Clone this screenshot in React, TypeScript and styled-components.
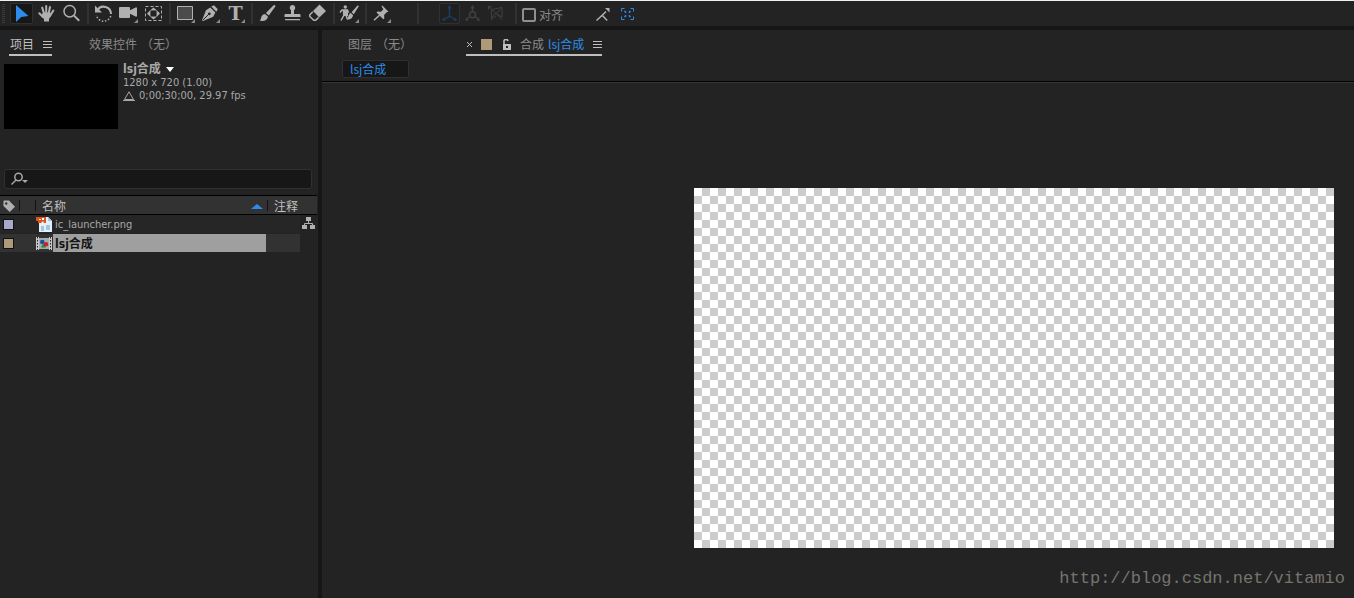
import React from "react";
import styled, { createGlobalStyle, css } from "styled-components";

const latin = '"DejaVu Sans Condensed", "DejaVu Sans", "Noto Sans CJK SC", sans-serif';
const cjk = '"Noto Sans CJK SC", "Noto Sans", sans-serif';

const c = {
  panel: "#232323",
  gutter: "#161616",
  icon: "#b0b0b0",
  text: "#a8a8a8",
  dim: "#8a8a8a",
  bright: "#bfbfbf",
  blue: "#2d8ceb",
};

const GlobalStyle = createGlobalStyle`
  *, *::before, *::after { box-sizing: border-box; }
  body {
    margin: 0;
    background: ${c.panel};
    color: ${c.text};
    font: 12px/14px ${cjk};
  }
  button {
    padding: 0;
    border: 0;
    background: none;
    color: inherit;
    font: inherit;
  }
  svg { display: block; }
`;

const Page = styled.div`
  display: flex;
  flex-direction: column;
  min-height: 100vh;
  border-top: 1px solid #eef3f2;
`;

const Toolbar = styled.header`
  display: flex;
  align-items: center;
  height: 29px;
  border-bottom: 4px solid ${c.gutter};
`;

const Grip = styled.div`
  width: 3px;
  height: 20px;
  margin: 0 4px 0 2px;
  background: repeating-linear-gradient(#3c3c3c 0 1px, transparent 1px 2px);
`;

const Group = styled.div`
  display: flex;
`;

const Separator = styled.div<{ $before?: number; $after?: number }>`
  width: 2px;
  height: 21px;
  margin: 0 ${(p) => p.$after ?? 2}px 0 ${(p) => p.$before ?? 3}px;
  background: #313131;
`;

const ToolButton = styled.button<{ $active?: boolean; $narrow?: boolean; $lit?: boolean }>`
  position: relative;
  display: flex;
  justify-content: center;
  width: ${(p) => (p.$narrow ? 23 : 25)}px;
  height: 25px;
  color: ${(p) => (p.$lit ? c.blue : p.$narrow ? "#404040" : c.icon)};
  ${(p) =>
    p.$active &&
    css`
      color: ${p.$narrow ? "#1d3d62" : c.blue};
      &::before {
        content: "";
        position: absolute;
        inset: 2px 1px;
        border: 1px solid #303030;
        border-radius: 2px;
        background: ${p.$narrow ? "#202020" : "#171717"};
      }
    `}
  svg {
    position: relative;
    flex: none;
  }
`;

const TypeGlyph = styled.span`
  font: bold 19px/25px "DejaVu Serif", serif;
`;

const FlyoutMark = styled.i`
  position: absolute;
  right: 3px;
  bottom: 3px;
  border: 2px solid transparent;
  border-right-color: #8a8a8a;
  border-bottom-color: #8a8a8a;
`;

const SnapLabel = styled.label`
  display: flex;
  align-items: center;
  gap: 3px;
  margin: 0 27px 0 3px;
  padding-top: 2px;
  color: ${c.dim};
`;

const CheckBox = styled.input`
  appearance: none;
  width: 14px;
  height: 14px;
  margin: 0;
  border: 2px solid #8f8f8f;
  border-radius: 2px;
`;

const Workspace = styled.div`
  display: flex;
  flex: 1;
`;

const ProjectPanel = styled.section`
  flex: none;
  width: 322px;
  border-right: 4px solid ${c.gutter};
`;

const ViewerPanel = styled.section`
  display: flex;
  flex: 1;
  flex-direction: column;
  min-width: 0;
`;

const TabBar = styled.nav<{ $inset: number; $gap: number }>`
  display: flex;
  gap: ${(p) => p.$gap}px;
  height: 26px;
  padding-left: ${(p) => p.$inset}px;
`;

const Tab = styled.div<{ $active?: boolean }>`
  display: flex;
  align-items: center;
  height: 26px;
  padding: 4px 0 0 1px;
  border-bottom: 2px solid ${(p) => (p.$active ? c.bright : "transparent")};
  color: ${(p) => (p.$active ? c.bright : c.dim)};
`;

const TabName = styled.button<{ $tone?: string }>`
  display: flex;
  gap: 4px;
  color: ${(p) => p.$tone ?? "inherit"};
`;

const TabTool = styled.button<{ $left?: number }>`
  margin-left: ${(p) => p.$left ?? 0}px;
`;

const CompName = styled.span`
  color: ${c.blue};
`;

const Swatch = styled.span<{ $color: string; $outlined?: boolean }>`
  display: block;
  width: 11px;
  height: 11px;
  margin-left: ${(p) => (p.$outlined ? 3 : 9)}px;
  border: ${(p) => (p.$outlined ? "1px solid #111" : "0")};
  background: ${(p) => p.$color};
`;

const Summary = styled.div`
  display: flex;
  gap: 5px;
  height: 65px;
  margin: 8px 4px 40px;
`;

const Thumbnail = styled.div`
  width: 114px;
  height: 65px;
  background: #000;
`;

const Details = styled.div`
  display: flex;
  flex-direction: column;
  margin-top: -1px;
  font: 11px/13px ${latin};
`;

const SummaryName = styled.button`
  display: flex;
  align-items: center;
  gap: 5px;
  height: 13px;
  font: bold 12px/13px ${latin};
`;

const Duration = styled.span`
  display: flex;
  align-items: center;
  gap: 4px;
`;

const Search = styled.label`
  display: flex;
  align-items: center;
  gap: 4px;
  height: 20px;
  margin: 0 6px 6px 4px;
  padding-left: 6px;
  border: 1px solid #303030;
  border-radius: 3px;
  background: #171717;
`;

const SearchInput = styled.input`
  flex: 1;
  min-width: 0;
  padding: 0;
  border: 0;
  outline: 0;
  background: none;
  color: ${c.text};
  font: 11px/14px ${latin};
`;

const Items = styled.table`
  width: 317px;
  table-layout: fixed;
  border-collapse: separate;
  border-spacing: 0;
`;

const HeadCell = styled.th<{ $line?: boolean }>`
  height: 20px;
  padding: 2px 0 0 6px;
  border: solid #000;
  border-width: 1px 0;
  background: #323232;
  ${(p) =>
    p.$line &&
    css`
      background: linear-gradient(#111, #111) right 0 center / 1px 11px no-repeat #323232;
    `}
  color: ${c.bright};
  font-weight: normal;
  text-align: left;
`;

const HeadInner = styled.span<{ $tight?: boolean }>`
  display: flex;
  align-items: center;
  justify-content: space-between;
  margin-left: ${(p) => (p.$tight ? -3 : 0)}px;
  padding-right: 5px;
`;

const Cell = styled.td<{ $selected?: boolean; $bare?: boolean }>`
  height: 19px;
  padding: 0;
  border-bottom: 1px solid ${c.panel};
  background: ${(p) => (p.$bare ? c.panel : p.$selected ? "#323232" : "#262626")};
`;

const FileEntry = styled.div`
  display: flex;
  align-items: center;
  gap: 1px;
  padding-right: 2px;
`;

const FileName = styled.span<{ $selected?: boolean }>`
  flex: 1;
  height: 18px;
  padding-left: 2px;
  background: ${(p) => (p.$selected ? "#9f9f9f" : "transparent")};
  color: ${(p) => (p.$selected ? "#161616" : c.text)};
  font: ${(p) => (p.$selected ? "bold 12px" : "11px")} / 20px ${latin};
`;

const PathBar = styled.div`
  height: 27px;
  padding: 4px 20px;
  border-bottom: 1px solid #353535;
  box-shadow: inset 0 -1px #000;
`;

const PathChip = styled.button`
  display: block;
  width: 67px;
  height: 18px;
  padding-left: 7px;
  border: 1px solid #303030;
  border-radius: 2px;
  background: #171717;
  color: ${c.blue};
  line-height: 16px;
  text-align: left;
`;

const Stage = styled.main`
  display: flex;
  flex: 1;
  flex-direction: column;
  align-items: flex-end;
  padding: 105px 20px 0;
`;

const Canvas = styled.div`
  width: 640px;
  max-width: 100%;
  aspect-ratio: 16 / 9;
  background: repeating-conic-gradient(#ccc 0 25%, #fff 0 50%) 0 0 / 16px 16px;
`;

const Watermark = styled.p`
  margin: 21px -11px 0 0;
  color: #75746d;
  font: 17px/20px "Liberation Mono", monospace;
`;

const Icon = ({ children, w = 25, h = 25 }: { children: React.ReactNode; w?: number; h?: number }) => (
  <svg width={w} height={h} viewBox={`0 0 ${w} ${h}`} fill="none" stroke="none" aria-hidden="true">
    {children}
  </svg>
);

const solid = { fill: "currentColor" };
const line = { stroke: "currentColor", strokeWidth: 1.5 };

const icons = {
  select: <path {...solid} d="M7 4 19.5 15 12.2 16 7 21z" />,
  hand: (
    <>
      <path {...line} strokeWidth={2} strokeLinecap="round" d="M5.3 12.3 9 16M8.2 6.6l2 6.4M12.2 5v8M16 6l-1.4 7M19.3 9.5 16 15" />
      <path {...solid} d="M9 11.5h7.4l.6 3-2 3.5v2.5h-5V18l-3-3z" />
    </>
  ),
  zoom: (
    <>
      <circle {...line} cx="10.7" cy="10.3" r="5.7" />
      <path {...line} strokeWidth={2} d="m15 14.6 5.2 5.2" />
    </>
  ),
  rotate: (
    <>
      <path {...line} strokeWidth={2} d="M6.3 9.5A7.3 7.3 0 0 1 20 13" />
      <path {...line} strokeDasharray="1.5 1.7" d="M19.7 15A7.3 7.3 0 0 1 5.5 14" />
      <path {...solid} d="M4 4.5v7h7z" />
    </>
  ),
  camera: <path {...solid} d="M4 6h9a1 1 0 0 1 1 1v2.3L19.5 6.5h1.5v9h-1.5L14 12.8V16a1 1 0 0 1-1 1H4a1 1 0 0 1-1-1V7a1 1 0 0 1 1-1z" />,
  anchor: (
    <>
      <path {...line} strokeWidth={1} strokeDasharray="3 2" d="M4.5 5.5h16v14h-16z" />
      <path {...solid} d="m12.5 6.5 3.5 3h-7zM12.5 18.5l3.5-3h-7zM6 12.5l3.5-3.5v7zM19 12.5 15.5 9v7z" />
      <circle cx="12.5" cy="12.5" r="2.8" fill={c.panel} />
    </>
  ),
  rect: <path stroke="currentColor" fill="#4b4b4b" d="M4.5 5.5h15v13h-15z" />,
  pen: (
    <>
      <path {...solid} d="m13.2 5.5 2.8-1.2 3.8 4-1.4 2.4zM12.2 6.4l5.2 5.1-2.2 4.2L5 20l-1-.8L8 9.2z" />
      <path d="m5 19 5.6-5.6" stroke={c.panel} />
      <circle cx="11.3" cy="12.8" r="1.4" fill={c.panel} />
    </>
  ),
  brush: <path {...solid} d="M20 4.2c.7.6.3 1.3-.2 2l-6 8.4-2.9-2.5 7.2-7.4c.6-.6 1.2-1 1.9-.5zM10 12.9l2.9 2.5C12.6 19 8.5 21 4 19.6c2.5-.7 1.5-2.2 2.5-4.2.7-1.4 2-2.3 3.5-2.5z" />,
  stamp: <path {...solid} d="M12.5 4a2.9 2.9 0 0 1 1.5 5.3V13h5.5a1 1 0 0 1 1 1v2h-16v-2a1 1 0 0 1 1-1H11V9.3A2.9 2.9 0 0 1 12.5 4zM5 18h15v1.3H5z" />,
  eraser: (
    <>
      <path {...solid} d="M14.5 3.5 21 10l-6.7 6.5L8 10z" />
      <path {...line} d="m7.8 10.7-3 3v1.8l4 3.7h2l2.8-2.8" />
    </>
  ),
  roto: (
    <>
      <circle {...solid} cx="8.3" cy="6" r="1.7" />
      <path {...line} d="M3 11.5 5 9h5.5l1 2.8M7 9v5l-3 5.5M9.3 9v6l1 3" />
      <path {...solid} d="M5.8 9H11v6H6z M21.3 4.5l.5.7-5 8-2.2-2 5.9-6.7zM13.7 12l2.3 2c-.2 3.2-3 5-6.5 4.6 2-1 1.5-5.6 4.2-6.6z" />
    </>
  ),
  pin: (
    <>
      <path {...solid} d="m13.3 4.5 6.2 6.3-1.8.5-2.6 2.6.2 3.5-1 .9-6.8-6.7.9-1 3.6.2 2.4-2.6-1.8-2.8z" />
      <path {...line} d="m10.5 14.3-5.5 5" />
    </>
  ),
  snapLine: (
    <>
      <path {...line} d="m6.5 19.5 5.7-5.3 5 5.3M11 15.5l5-5" />
      <path {...solid} d="M15 7h4.5v4.5z" />
    </>
  ),
  snapBox: (
    <>
      <path {...line} strokeWidth={1} d="M9.5 7.5h-3v3M15.5 7.5h3v3M9.5 18.5h-3v-3M15.5 18.5h3v-3" />
      <path {...line} d="M9.5 10l1.6 1.6M15.5 10l-1.6 1.6M9.5 16l1.6-1.6M15.5 16l-1.6-1.6" />
    </>
  ),
};

const axes = {
  local: (
    <>
      <path {...line} d="M11.5 6v9l-6 4M11.5 15l6 4" />
      <path {...solid} d="m11.5 4 2.3 3.5H9.2zM4.2 19.8l1-3.6 2.4 3.6zM18.8 19.8l-1-3.6-2.4 3.6z" />
    </>
  ),
  world: (
    <>
      <path {...line} d="M11.5 6v5M8.5 16l-3.5 2.5M14.5 16l3.5 2.5" />
      <circle {...line} cx="11.5" cy="13.8" r="3" />
      <path {...solid} d="m11.5 4 2.3 3.5H9.2zM4.2 19.8l1-3.6 2.4 3.6zM18.8 19.8l-1-3.6-2.4 3.6z" />
    </>
  ),
  view: (
    <>
      <path {...line} strokeWidth={1} d="M7.5 9v9.5L12 15M8 8.5l10-2v9.5l-5-3M6.5 7l12 12M8 16l9-8" />
      <path {...solid} d="M4 5h4L4 9z" />
    </>
  ),
};

type ToolSpec = { id: keyof typeof icons | "type"; label: string; more?: boolean; lit?: boolean };

const toolGroups: ToolSpec[][] = [
  [
    { id: "select", label: "选取工具" },
    { id: "hand", label: "手形工具" },
    { id: "zoom", label: "缩放工具" },
  ],
  [
    { id: "rotate", label: "旋转工具" },
    { id: "camera", label: "摄像机工具", more: true },
    { id: "anchor", label: "锚点工具" },
  ],
  [
    { id: "rect", label: "矩形工具", more: true },
    { id: "pen", label: "钢笔工具", more: true },
    { id: "type", label: "文字工具", more: true },
  ],
  [
    { id: "brush", label: "画笔工具" },
    { id: "stamp", label: "仿制图章工具" },
    { id: "eraser", label: "橡皮擦工具" },
  ],
  [{ id: "roto", label: "Roto 笔刷工具", more: true }],
  [{ id: "pin", label: "操控点工具", more: true }],
];

const Tool = ({ id, label, more, lit }: ToolSpec) => (
  <ToolButton type="button" aria-label={label} $active={id === "select"} $lit={lit}>
    {id === "type" ? <TypeGlyph>T</TypeGlyph> : <Icon>{icons[id]}</Icon>}
    {more && <FlyoutMark />}
  </ToolButton>
);

const MenuIcon = () => (
  <Icon w={9} h={9}>
    <path stroke="currentColor" d="M0 1.5h9M0 4.5h9M0 7.5h9" />
  </Icon>
);

const PngIcon = () => (
  <Icon w={16} h={16}>
    <path fill="#e4f0fa" d="M3 1h9l4 4v11H3z" />
    <path fill="#9fc6e6" d="M12 1v4h4zM5 10h3v5H5zM10 9h4v5h-4z" />
    <path fill="#dd5418" d="M0 1h10v6H8L7 5 5 7H2V5H0z" />
    <path fill="#fff" d="M3 3h2v1H3zM6 2h2v2H6z" />
  </Icon>
);

const CompIcon = () => (
  <Icon w={16} h={13}>
    <path fill="#c9c9c9" d="M0 0h16v13H0z" />
    <path fill="#a3adb2" d="M3 1h10v11H3z" />
    <path stroke="#222" strokeDasharray="1.5 1.5" d="M1.5 0v13M14.5 0v13" />
    <path stroke="#333" d="M3 .5h10M3 12.5h10" />
    <circle cx="6.3" cy="5" r="2.3" fill="#1c4f9c" />
    <path fill="#1f8a3c" d="M5 10.5 7.5 6l2.5 4.5z" />
    <circle cx="10" cy="7.3" r="2.3" fill="#c8232c" />
  </Icon>
);

export default function App() {
  return (
    <>
      <GlobalStyle />
      <Page>
        <Toolbar>
          <Grip />
          {toolGroups.map((group, i) => (
            <React.Fragment key={group[0].id}>
              {i > 0 && <Separator />}
              <Group>
                {group.map((tool) => (
                  <Tool key={tool.id} {...tool} />
                ))}
              </Group>
            </React.Fragment>
          ))}
          <Separator $before={23} $after={19} />
          <Group>
            <ToolButton type="button" aria-label="本地轴模式" $narrow $active>
              <Icon w={23}>{axes.local}</Icon>
            </ToolButton>
            <ToolButton type="button" aria-label="世界轴模式" $narrow>
              <Icon w={23}>{axes.world}</Icon>
            </ToolButton>
            <ToolButton type="button" aria-label="视图轴模式" $narrow>
              <Icon w={23}>{axes.view}</Icon>
            </ToolButton>
          </Group>
          <Separator $before={8} />
          <SnapLabel>
            <CheckBox type="checkbox" />
            对齐
          </SnapLabel>
          <Group>
            <Tool id="snapLine" label="对齐到边缘" />
            <Tool id="snapBox" label="对齐到特征" lit />
          </Group>
        </Toolbar>

        <Workspace>
          <ProjectPanel>
            <TabBar $inset={9} $gap={36}>
              <Tab $active>
                <TabName type="button">项目</TabName>
                <TabTool type="button" aria-label="项目菜单" $left={9}>
                  <MenuIcon />
                </TabTool>
              </Tab>
              <Tab>
                <TabName type="button">
                  <span>效果控件</span>
                  <span>（无）</span>
                </TabName>
              </Tab>
            </TabBar>

            <Summary>
              <Thumbnail />
              <Details>
                <SummaryName type="button">
                  lsj合成
                  <Icon w={8} h={5}>
                    <path fill="#fff" d="M0 0h8L4 5z" />
                  </Icon>
                </SummaryName>
                <span>1280 x 720 (1.00)</span>
                <Duration>
                  <Icon w={12} h={10}>
                    <path stroke="currentColor" d="M6 .8 10.5 8.5h-9zM0 9.5h12" />
                  </Icon>
                  0;00;30;00, 29.97 fps
                </Duration>
              </Details>
            </Summary>

            <Search>
              <Icon w={18} h={14}>
                <circle {...line} cx="7.5" cy="5" r="3.7" />
                <path {...line} d="m5 8-4.5 4.5" />
                <path {...solid} d="M11 8h6l-3 3z" />
              </Icon>
              <SearchInput type="text" aria-label="搜索" />
            </Search>

            <Items>
              <colgroup>
                <col width={20} />
                <col width={16} />
                <col width={232} />
                <col width={32} />
                <col width={17} />
              </colgroup>
              <thead>
                <tr>
                  <HeadCell $line aria-label="标签">
                    <HeadInner $tight>
                      <Icon w={13} h={13}>
                        <path fill={c.icon} fillRule="evenodd" d="M1 0h5.5L13 6.8 7.3 12.5.5 6V1zM3.5 2a1.3 1.3 0 1 0 0 2.6 1.3 1.3 0 0 0 0-2.6z" />
                      </Icon>
                    </HeadInner>
                  </HeadCell>
                  <HeadCell $line />
                  <HeadCell $line>
                    <HeadInner>
                      名称
                      <Icon w={12} h={5}>
                        <path fill={c.blue} d="M0 5 6 0l6 5z" />
                      </Icon>
                    </HeadInner>
                  </HeadCell>
                  <HeadCell colSpan={2}>注释</HeadCell>
                </tr>
              </thead>
              <tbody>
                <tr>
                  <Cell>
                    <Swatch $color="#a9a9cb" $outlined />
                  </Cell>
                  <Cell />
                  <Cell>
                    <FileEntry>
                      <PngIcon />
                      <FileName>ic_launcher.png</FileName>
                    </FileEntry>
                  </Cell>
                  <Cell />
                  <Cell $bare>
                    <TabTool type="button" aria-label="流程图" $left={2}>
                      <Icon w={13} h={12}>
                        <path fill={c.icon} d="M4 0h5v4H4zM0 8h5v4H0zM8 8h5v4H8z" />
                        <path stroke={c.icon} d="M6.5 4v2.5M2.5 8V6.5h8V8" />
                      </Icon>
                    </TabTool>
                  </Cell>
                </tr>
                <tr>
                  <Cell $selected>
                    <Swatch $color="#ae9a78" $outlined />
                  </Cell>
                  <Cell $selected />
                  <Cell $selected>
                    <FileEntry>
                      <CompIcon />
                      <FileName $selected>lsj合成</FileName>
                    </FileEntry>
                  </Cell>
                  <Cell $selected />
                  <Cell $bare />
                </tr>
              </tbody>
            </Items>
          </ProjectPanel>

          <ViewerPanel>
            <TabBar $inset={25} $gap={54}>
              <Tab>
                <TabName type="button">
                  <span>图层</span>
                  <span>（无）</span>
                </TabName>
              </Tab>
              <Tab $active>
                <TabTool type="button" aria-label="关闭">
                  <Icon w={5} h={5}>
                    <path stroke="currentColor" d="m0 0 5 5M5 0 0 5" />
                  </Icon>
                </TabTool>
                <Swatch $color="#ae9a78" />
                <TabTool type="button" aria-label="锁定" $left={10}>
                  <Icon w={9} h={11}>
                    <path {...solid} fillRule="evenodd" d="M1 5h8v6H1zM4 7v2h2V7z" />
                    <path {...line} d="M2 5V3a2 2 0 0 1 4-1" />
                  </Icon>
                </TabTool>
                <TabTool type="button" $left={9}>
                  <TabName as="span" $tone={c.dim}>
                    <span>合成</span>
                    <CompName>lsj合成</CompName>
                  </TabName>
                </TabTool>
                <TabTool type="button" aria-label="合成菜单" $left={9}>
                  <MenuIcon />
                </TabTool>
              </Tab>
            </TabBar>
            <PathBar>
              <PathChip type="button">lsj合成</PathChip>
            </PathBar>
            <Stage>
              <Canvas role="img" aria-label="合成画面" />
              <Watermark>http://blog.csdn.net/vitamio</Watermark>
            </Stage>
          </ViewerPanel>
        </Workspace>
      </Page>
    </>
  );
}
